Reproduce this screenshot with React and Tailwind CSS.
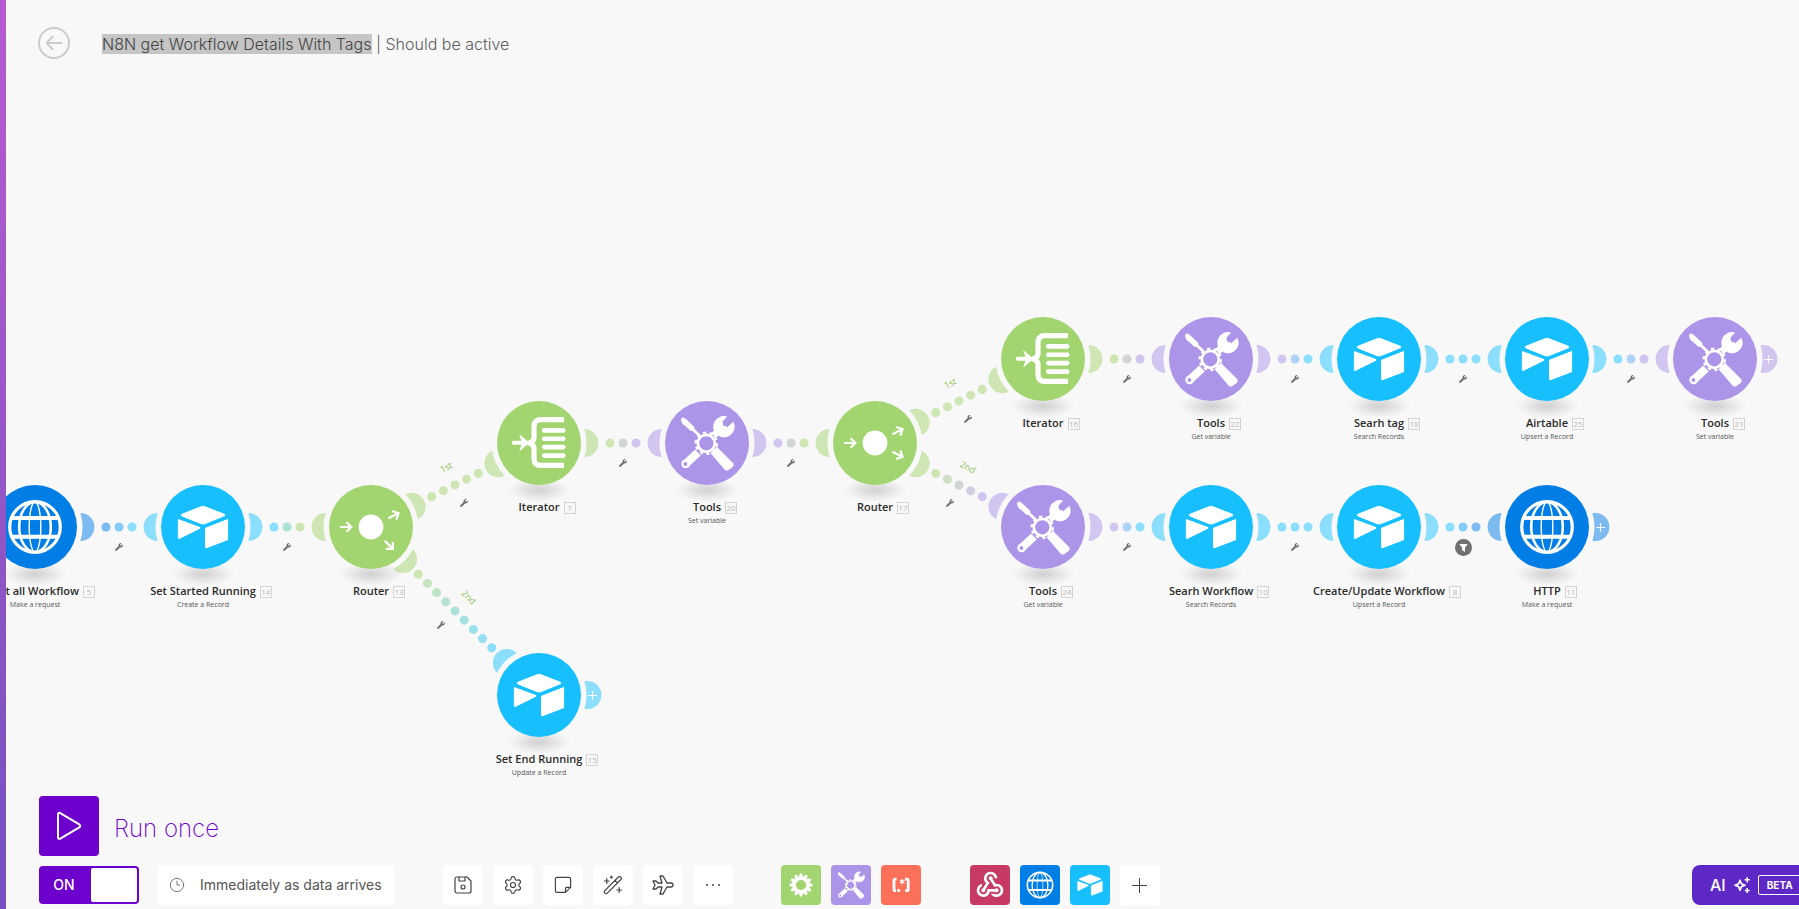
import { FaWrench } from "react-icons/fa";
import { MdWebhook } from "react-icons/md";
import { TbDeviceFloppy, TbPlane } from "react-icons/tb";
import { Settings, Clock3 } from "lucide-react";

const COL = 168;
const ROW = 84;

const apps = {
  http: { solid: "#007ee6", soft: "#7cbaf0" },
  airtable: { solid: "#18bfff", soft: "#8cdefd" },
  flow: { solid: "#a2d46f", soft: "#cde6b4" },
  tools: { solid: "#ac94e8", soft: "#d2c6f0" },
};

const nodes = [
  { id: 5, col: 0, row: 2, app: "http", icon: "globe", title: "Get all Workflow", sub: "Make a request" },
  { id: 14, col: 1, row: 2, app: "airtable", icon: "airtable", title: "Set Started Running", sub: "Create a Record" },
  { id: 13, col: 2, row: 2, app: "flow", icon: "router", title: "Router", angles: [-26.57, 45] },
  { id: 7, col: 3, row: 1, app: "flow", icon: "iterator", title: "Iterator" },
  { id: 20, col: 4, row: 1, app: "tools", icon: "tools", title: "Tools", sub: "Set variable" },
  { id: 17, col: 5, row: 1, app: "flow", icon: "router", title: "Router", angles: [-26.57, 26.57] },
  { id: 16, col: 6, row: 0, app: "flow", icon: "iterator", title: "Iterator" },
  { id: 22, col: 7, row: 0, app: "tools", icon: "tools", title: "Tools", sub: "Get variable" },
  { id: 18, col: 8, row: 0, app: "airtable", icon: "airtable", title: "Searh tag", sub: "Search Records" },
  { id: 25, col: 9, row: 0, app: "airtable", icon: "airtable", title: "Airtable", sub: "Upsert a Record" },
  { id: 21, col: 10, row: 0, app: "tools", icon: "tools", title: "Tools", sub: "Set variable", end: true },
  { id: 24, col: 6, row: 2, app: "tools", icon: "tools", title: "Tools", sub: "Get variable" },
  { id: 10, col: 7, row: 2, app: "airtable", icon: "airtable", title: "Searh Workflow", sub: "Search Records" },
  { id: 8, col: 8, row: 2, app: "airtable", icon: "airtable", title: "Create/Update Workflow", sub: "Upsert a Record" },
  { id: 11, col: 9, row: 2, app: "http", icon: "globe", title: "HTTP", sub: "Make a request", end: true },
  { id: 15, col: 3, row: 4, app: "airtable", icon: "airtable", title: "Set End Running", sub: "Update a Record", end: true },
];

const edges = [
  { from: 5, to: 14 },
  { from: 14, to: 13 },
  { from: 13, to: 7, label: "1st" },
  { from: 13, to: 15, label: "2nd" },
  { from: 7, to: 20 },
  { from: 20, to: 17 },
  { from: 17, to: 16, label: "1st" },
  { from: 17, to: 24, label: "2nd" },
  { from: 16, to: 22 },
  { from: 22, to: 18 },
  { from: 18, to: 25 },
  { from: 25, to: 21 },
  { from: 24, to: 10 },
  { from: 10, to: 8 },
  { from: 8, to: 11, filter: true },
];

const place = (n) => ({ x: 29 + n.col * COL, y: 273 + n.row * ROW });
const byId = Object.fromEntries(nodes.map((n) => [n.id, n]));

function mix(a, b, t) {
  const part = (c, i) => parseInt(c.slice(1 + i * 2, 3 + i * 2), 16);
  const v = [0, 1, 2].map((i) => Math.round(part(a, i) * (1 - t) + part(b, i) * t));
  return `rgb(${v.join(",")})`;
}

function GlobeIcon() {
  return (
    <g fill="none" stroke="#fff">
      <circle r="25.3" strokeWidth="3.2" />
      <ellipse rx="15.8" ry="25" strokeWidth="2.6" />
      <ellipse rx="5.8" ry="25" strokeWidth="1.4" />
      <path d="M-23.5 -9H23.5M-23.5 9.8H23.5" strokeWidth="4" />
    </g>
  );
}

function AirtableIcon() {
  return (
    <g fill="#fff" stroke="#fff" strokeWidth="1" strokeLinejoin="round">
      <path d="M-2 -20.2Q0 -21 2 -20.2L21.6 -12.6V-11.4L2 -3.4Q0 -2.7 -2 -3.4L-21.4 -11.2V-12.6Z" />
      <path d="M-24.6 -7.4L-3 0.6V1.2L-24 11.6L-24.6 11.3Z" />
      <path d="M2.6 1.2L24.6 -7.4V12.7L2.9 20.9L2.6 20.5Z" />
    </g>
  );
}

function ToolsIcon() {
  return (
    <g>
      <g fill="none" stroke="#fff">
        <path d="M-24 -23.5L-22.5 -20" strokeWidth="4" strokeLinecap="round" />
        <path d="M-22.5 -21.5L-15.5 -15" strokeWidth="5.6" strokeLinecap="round" />
        <path d="M-15 -14.5L-7 -7" strokeWidth="2.8" />
        <path d="M6 -7L13 -13.5" strokeWidth="7" />
        <path d="M-9 9.5L-21.8 21.2" strokeWidth="8.2" strokeLinejoin="round" />
      </g>
      <path
        d="M19.4 -26.2A10.2 10.2 0 1 0 26.2 -20.6L20.6 -15.6L15.8 -17.2L15 -21.4Z"
        fill="#fff"
        stroke="#fff"
        strokeWidth="1"
        strokeLinejoin="round"
      />
      <circle cx="-21.3" cy="20.8" r="4.4" fill="#fff" />
      <circle cx="-21.6" cy="21" r="1.9" fill="#ac94e8" />
      <path d="M3.5 9.5L9.5 4L26 20.5V23.2L20.8 27H18.4Z" fill="#fff" stroke="#fff" strokeLinejoin="round" />
      <circle cx="-0.7" cy="0.3" r="10.6" fill="#ac94e8" />
      <circle cx="-0.7" cy="0.3" r="8.5" fill="none" stroke="#fff" strokeWidth="2.8" />
      <circle cx="-0.7" cy="0.3" r="10.6" fill="none" stroke="#fff" strokeWidth="2.4" pathLength="100" strokeDasharray="5 5" />
    </g>
  );
}

function IteratorIcon() {
  return (
    <g>
      <g fill="none" stroke="#fff" strokeWidth="5.2">
        <path d="M25 -23.4H2Q-5 -23.4 -5 -16.5V-5Q-5 -2 -9.5 0Q-5 2 -5 5V15.5Q-5 22.4 2 22.4H25" />
        <path d="M-25.2 -0.2H-16" strokeWidth="4" strokeLinecap="round" />
      </g>
      <path d="M-19.8 -9L-9.5 -0.2L-19.8 8.6L-17 -0.2Z" fill="#fff" />
      {[-12.6, -4.3, 4.1, 12.6].map((y) => (
        <path
          key={y}
          transform={`translate(0 ${y})`}
          d="M5.2 -2.3H24.4V-3.1L27 0L24.4 3.1V2.3H5.2A2.3 2.3 0 0 1 5.2 -2.3Z"
          fill="#fff"
        />
      ))}
    </g>
  );
}

function RouterIcon({ angles }) {
  const arrow = "M0 0H11.4M6.6 -4.8L11.4 0L6.6 4.8";
  return (
    <g>
      <circle r="12.4" fill="#fff" />
      <g fill="none" stroke="#fff" strokeWidth="2.2">
        <path d={arrow} transform="translate(-31 0)" />
        {angles.map((a) => (
          <path key={a} d={arrow} transform={`rotate(${a}) translate(19.4 0)`} />
        ))}
      </g>
    </g>
  );
}

const glyphs = { globe: GlobeIcon, airtable: AirtableIcon, tools: ToolsIcon, iterator: IteratorIcon, router: RouterIcon };

function Ear({ angle, color, wide }) {
  const d = wide
    ? "M45.4 -14H48.4A14 14 0 0 1 48.4 14H45.4A47.5 47.5 0 0 0 45.4 -14Z"
    : "M45.4 -14A14 14 0 0 1 45.4 14A47.5 47.5 0 0 0 45.4 -14Z";
  return <path d={d} fill={color} transform={`rotate(${angle})`} />;
}

function Edge({ edge }) {
  const a = byId[edge.from];
  const b = byId[edge.to];
  const p = place(a);
  const q = place(b);
  const dist = Math.hypot(q.x - p.x, q.y - p.y);
  const angle = (Math.atan2(q.y - p.y, q.x - p.x) * 180) / Math.PI;
  const count = 2 * Math.floor((dist / 2 - 64) / 13) + 1;
  const from = apps[a.app].soft;
  const to = apps[b.app].soft;
  return (
    <g>
      <g transform={`translate(${p.x} ${p.y})`}>
        <Ear angle={angle} color={from} />
      </g>
      <g transform={`translate(${q.x} ${q.y})`}>
        <Ear angle={angle + 180} color={to} />
      </g>
      <g transform={`translate(${p.x} ${p.y}) rotate(${angle})`}>
        {Array.from({ length: count }, (_, i) => (
          <circle
            key={i}
            cx={dist / 2 + (i - (count - 1) / 2) * 13}
            r="4.5"
            fill={mix(from, to, count > 1 ? i / (count - 1) : 0)}
          />
        ))}
      </g>
    </g>
  );
}

function EdgeMarks({ edge }) {
  const p = place(byId[edge.from]);
  const q = place(byId[edge.to]);
  const dist = Math.hypot(q.x - p.x, q.y - p.y);
  const nx = -(q.y - p.y) / dist;
  const ny = (q.x - p.x) / dist;
  const mx = (p.x + q.x) / 2;
  const my = (p.y + q.y) / 2;
  const angle = (Math.atan2(q.y - p.y, q.x - p.x) * 180) / Math.PI;
  return (
    <>
      <button
        type="button"
        aria-label={edge.filter ? "Filter" : "Set up a filter"}
        className="absolute flex size-[18px] -translate-x-1/2 -translate-y-1/2 items-center justify-center rounded-full text-[#707070]"
        style={{ left: mx + nx * 20, top: my + ny * 20 }}
      >
        {edge.filter ? (
          <svg viewBox="0 0 17 17" className="size-[17px]">
            <circle cx="8.5" cy="8.5" r="8.5" fill="#707070" />
            <path d="M4.2 5H12.8L10 8.6V13L7 11V8.6Z" fill="#fff" />
          </svg>
        ) : (
          <FaWrench className="size-2" />
        )}
      </button>
      {edge.label && (
        <span
          className="absolute text-[9px] leading-none text-[#8fc35c]"
          style={{
            left: mx - nx * 20,
            top: my - ny * 20,
            transform: `translate(-50%, -50%) rotate(${angle}deg)`,
          }}
        >
          {edge.label}
        </span>
      )}
    </>
  );
}

function Node({ node }) {
  const { x, y } = place(node);
  const Glyph = glyphs[node.icon];
  return (
    <div className="absolute flex w-[84px] flex-col items-center" style={{ left: x - 42, top: y - 42 }}>
      <svg viewBox="-32 -12 64 24" className="absolute top-[77px] h-6 w-16">
        <ellipse rx="32" ry="12" fill="url(#ground)" />
      </svg>
      <button
        type="button"
        aria-label={node.title}
        className="relative size-[84px] rounded-full"
        style={{ backgroundColor: apps[node.app].solid }}
      >
        <svg viewBox="-42 -42 84 84" className="size-full">
          <Glyph angles={node.angles} />
        </svg>
      </button>
      <div className="relative mt-[14px] text-[11px] leading-4 font-semibold whitespace-nowrap text-[#2b2b2b]">
        {node.title}
        <span className="absolute top-[3px] left-full ml-1 flex size-3 items-center justify-center border border-[#d4d4d4] text-[8px] leading-none font-normal text-[#b8b8b8]">
          {node.id}
        </span>
      </div>
      {node.sub && (
        <div className="relative mt-[1px] text-[7px] leading-[10px] whitespace-nowrap text-[#555]">{node.sub}</div>
      )}
    </div>
  );
}

function Canvas() {
  return (
    <section className="relative min-h-[640px] flex-1 font-['Open_Sans',sans-serif]">
      <svg className="absolute inset-0 size-full overflow-visible">
        <defs>
          <radialGradient id="ground">
            <stop offset="0" stopColor="#000" stopOpacity="0.16" />
            <stop offset="0.5" stopColor="#000" stopOpacity="0.08" />
            <stop offset="1" stopColor="#000" stopOpacity="0" />
          </radialGradient>
        </defs>
        {edges.map((e) => (
          <Edge key={`${e.from}-${e.to}`} edge={e} />
        ))}
        {nodes
          .filter((n) => n.end)
          .map((n) => {
            const { x, y } = place(n);
            return (
              <g key={n.id} transform={`translate(${x} ${y})`}>
                <Ear angle={0} color={apps[n.app].soft} wide />
                <path d="M49.2 0.5H58.2M53.5 -4V5" stroke="#fff" strokeWidth="1.1" />
              </g>
            );
          })}
      </svg>
      {nodes.map((n) => (
        <Node key={n.id} node={n} />
      ))}
      {edges.map((e) => (
        <EdgeMarks key={`${e.from}-${e.to}`} edge={e} />
      ))}
    </section>
  );
}

function ToolButton({ label, className = "bg-white", children }) {
  return (
    <button
      type="button"
      aria-label={label}
      className={`flex size-10 shrink-0 items-center justify-center rounded text-[#444] ${className}`}
    >
      {children}
    </button>
  );
}

function NoteIcon() {
  return (
    <svg viewBox="0 0 18 18" className="size-[18px]" fill="none" stroke="currentColor" strokeWidth="1.2" strokeLinejoin="round">
      <path d="M11.5 16.4H2.8A1.4 1.4 0 0 1 1.4 15V2.8A1.4 1.4 0 0 1 2.8 1.4H15.2A1.4 1.4 0 0 1 16.6 2.8V11.4L11.5 16.4V12.4A1 1 0 0 1 12.5 11.4H16.6" />
    </svg>
  );
}

function WandIcon() {
  return (
    <svg viewBox="0 0 20 20" className="size-5" fill="none" stroke="currentColor" strokeWidth="1.2" strokeLinecap="round" strokeLinejoin="round">
      <path d="M1.8 15.6L15.4 2Q16.6 1 17.8 2.1Q19 3.3 17.9 4.5L4.3 18.1Q3 19.2 1.9 18.1Q0.8 17 1.8 15.6ZM12 5.4L14.5 7.9" />
      <path d="M3.8 3.6V8.4M1.4 6H6.2M8.4 1.2V3.2M7.4 2.2H9.4M16.2 12.6V17.4M13.8 15H18.6" />
    </svg>
  );
}

function CogIcon() {
  return (
    <svg viewBox="-12 -12 24 24" className="size-6" fill="#fff">
      {Array.from({ length: 12 }, (_, i) => (
        <path key={i} d="M-1.9 -8L-1.2 -11.4H1.2L1.9 -8Z" transform={`rotate(${i * 30})`} />
      ))}
      <circle r="6.9" fill="none" stroke="#fff" strokeWidth="3.6" />
    </svg>
  );
}

function PatternIcon() {
  return (
    <svg viewBox="0 0 20 16" className="h-4 w-5" fill="none" stroke="#fff" strokeWidth="2.8" strokeLinejoin="round">
      <path d="M5.6 2.2H4.2Q3 2.2 3 3.4V12.4Q3 13.6 4.2 13.6H5M14 2.2H16Q17.2 2.2 17.2 3.4V12.4Q17.2 13.6 16 13.6H14.2" />
      <circle cx="7.6" cy="13.4" r="1.6" fill="#fff" stroke="none" />
      <path d="M11.2 2V7.2M8.9 3.3L13.5 5.9M13.5 3.3L8.9 5.9" strokeWidth="1.2" />
    </svg>
  );
}

function SmallGlyph({ of: Glyph }) {
  return (
    <svg viewBox="-28 -28 56 56" className="size-7">
      <Glyph />
    </svg>
  );
}

function Header() {
  return (
    <header className="flex h-[86px] shrink-0 items-center gap-8 pl-8">
      <a href="#scenarios" aria-label="Back" className="text-[#cbcbcb]">
        <svg viewBox="0 0 32 32" className="size-8" fill="none" stroke="currentColor" strokeWidth="2" strokeLinecap="round" strokeLinejoin="round">
          <circle cx="16" cy="16" r="15" />
          <path d="M23.6 16H9M14.6 9.8L8.6 16L14.6 22.2" />
        </svg>
      </a>
      <h1 className="pt-0.5 text-base leading-5 font-light whitespace-nowrap text-[#5c5c5c]">
        <span className="bg-[#c5c5c5] text-[#444]">N8N get Workflow Details With Tags</span> | Should be active
      </h1>
    </header>
  );
}

function Footer() {
  return (
    <footer className="flex shrink-0 flex-col gap-[9px] pb-1 pl-[33px]">
      <button type="button" className="flex items-center gap-[15px] self-start text-[#6d00cc]">
        <span className="flex size-[60px] items-center justify-center rounded bg-[#6d00cc]">
          <svg viewBox="0 0 26 30" className="h-[30px] w-[26px]" fill="none" stroke="#fff" strokeWidth="2" strokeLinejoin="round">
            <path d="M2 3.8Q2 0.8 4.7 2.4L23.3 13.4Q25.2 15 23.3 16.4L4.7 27.4Q2 28.8 2 26Z" />
          </svg>
        </span>
        <span className="pt-1.5 text-2xl leading-8 font-extralight">Run once</span>
      </button>
      <div className="flex items-center">
        <label className="flex h-[38px] w-[100px] shrink-0 cursor-pointer items-center rounded bg-[#6d00cc] p-0.5 text-sm font-medium text-white">
          <input type="checkbox" role="switch" defaultChecked className="sr-only" />
          <span className="flex-1 pr-1 text-center">ON</span>
          <span className="h-full w-[46px] rounded-xs bg-white" />
        </label>
        <button type="button" className="ml-[18px] flex h-10 shrink-0 items-center gap-[15px] rounded bg-white px-3 pr-[13px] text-sm whitespace-nowrap text-[#555]">
          <Clock3 className="size-4" strokeWidth={1.2} />
          Immediately as data arrives
        </button>
        <div className="ml-12 flex gap-[10px]">
          <ToolButton label="Save">
            <TbDeviceFloppy className="size-6 stroke-[1.2]" />
          </ToolButton>
          <ToolButton label="Scenario settings">
            <Settings className="size-5" strokeWidth={1.4} />
          </ToolButton>
          <ToolButton label="Notes">
            <NoteIcon />
          </ToolButton>
          <ToolButton label="Auto-align">
            <WandIcon />
          </ToolButton>
          <ToolButton label="Explain flow">
            <TbPlane className="size-6 stroke-[1.3]" />
          </ToolButton>
          <ToolButton label="More">
            <svg viewBox="0 0 16 4" className="h-1 w-4" fill="currentColor">
              <circle cx="2" cy="2" r="1" />
              <circle cx="8" cy="2" r="1" />
              <circle cx="14" cy="2" r="1" />
            </svg>
          </ToolButton>
        </div>
        <div className="ml-12 flex gap-[10px]">
          <ToolButton label="Flow control" className="bg-[#a2d46f]">
            <CogIcon />
          </ToolButton>
          <ToolButton label="Tools" className="bg-[#ac94e8]">
            <SmallGlyph of={ToolsIcon} />
          </ToolButton>
          <ToolButton label="Text parser" className="bg-[#fc7059]">
            <PatternIcon />
          </ToolButton>
        </div>
        <div className="ml-[49px] flex gap-[10px]">
          <ToolButton label="Webhooks" className="bg-[#c73a63]">
            <MdWebhook className="size-8 text-white" />
          </ToolButton>
          <ToolButton label="HTTP" className="bg-[#007ee6]">
            <SmallGlyph of={GlobeIcon} />
          </ToolButton>
          <ToolButton label="Airtable" className="bg-[#18bfff]">
            <SmallGlyph of={AirtableIcon} />
          </ToolButton>
          <ToolButton label="Add app">
            <svg viewBox="0 0 15 15" className="size-[15px]" stroke="currentColor" strokeWidth="1">
              <path d="M0 7.5H15M7.5 0V15" />
            </svg>
          </ToolButton>
        </div>
        <button
          type="button"
          className="ml-auto flex h-10 w-[107px] shrink-0 items-center overflow-hidden rounded-l-lg bg-[#5e28c6] pl-[18px] text-base font-medium text-white"
        >
          AI
          <svg viewBox="0 0 16 16" className="ml-2 size-4 shrink-0" fill="none" stroke="#fff" strokeWidth="1.7" strokeLinejoin="round">
            <path d="M6 3.2L7.4 6.8L11 8.2L7.4 9.6L6 13.2L4.6 9.6L1 8.2L4.6 6.8Z" />
            <path d="M13.2 0.2V5.4M10.6 2.8H15.8M13.2 11V16M10.8 13.5H15.6" strokeWidth="1.6" />
          </svg>
          <span className="ml-2 flex h-5 shrink-0 items-center rounded-xs border border-white px-2 text-[10px] font-bold">BETA</span>
        </button>
      </div>
    </footer>
  );
}

export default function App() {
  return (
    <div className="flex min-h-screen bg-[#f8f8f8] font-['Inter',sans-serif]">
      <div className="relative z-10 w-1.5 shrink-0 bg-linear-to-b from-[#b75ad0] to-[#7450c0]" />
      <main className="flex min-w-0 flex-1 flex-col overflow-hidden">
        <Header />
        <Canvas />
        <Footer />
      </main>
    </div>
  );
}
